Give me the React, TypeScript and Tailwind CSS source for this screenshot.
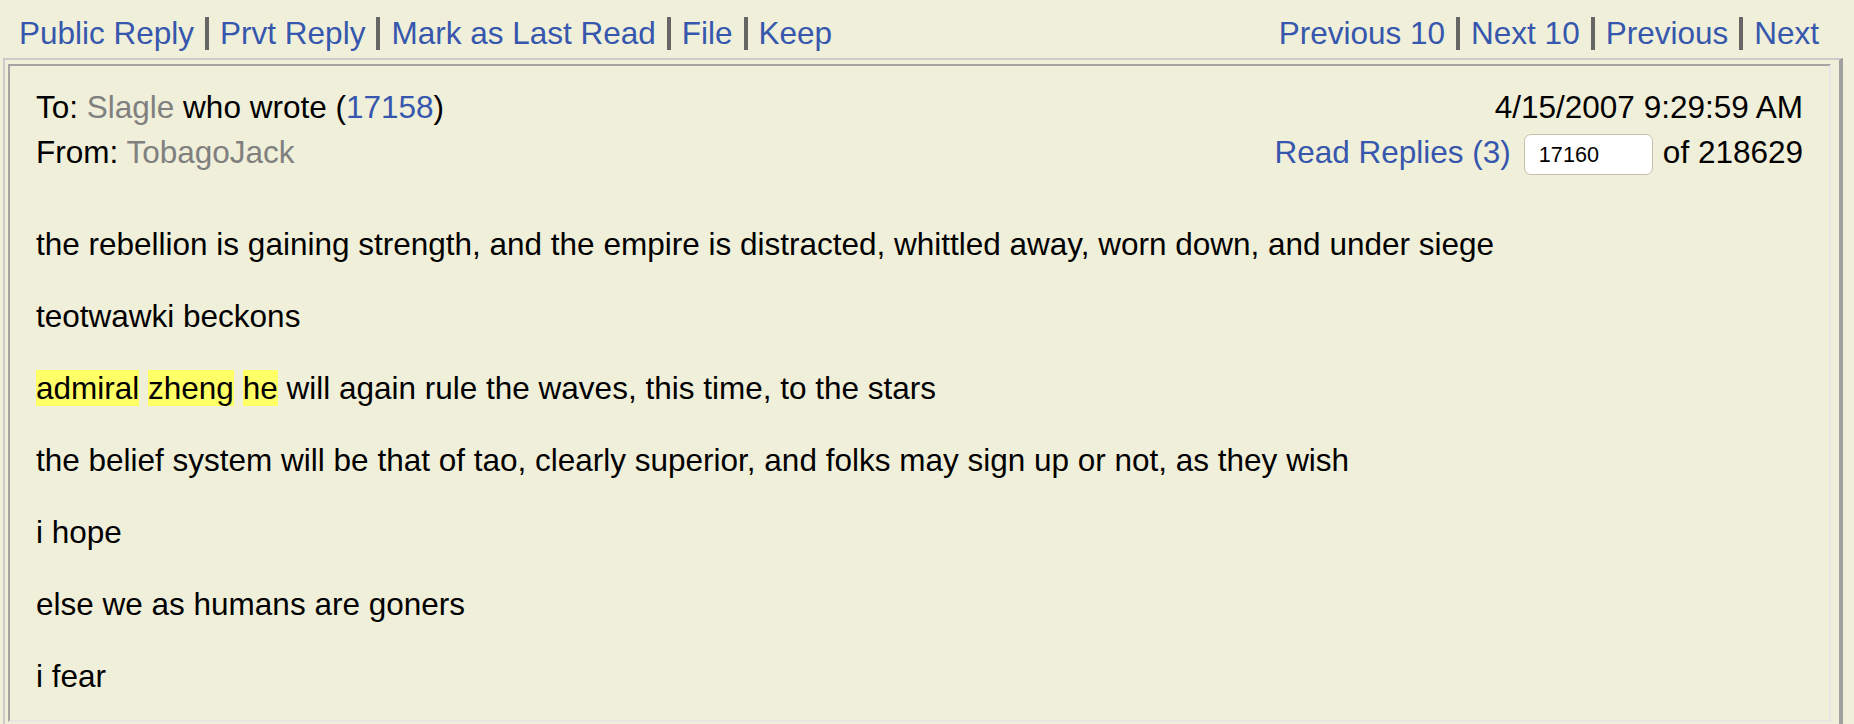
import React from 'react';

const navLeft = ['Public Reply', 'Prvt Reply', 'Mark as Last Read', 'File', 'Keep'];
const navRight = ['Previous 10', 'Next 10', 'Previous', 'Next'];

const NavGroup: React.FC<{ items: string[] }> = ({ items }) => (
  <div className="flex items-center">
    {items.map((label, i) => (
      <React.Fragment key={label}>
        {i > 0 && <span className="mx-[11px] h-[33px] w-[4px] bg-[#666666]" />}
        <a href="#" className="text-[#3657ad] whitespace-nowrap">{label}</a>
      </React.Fragment>
    ))}
  </div>
);

const Hl: React.FC<{ children: React.ReactNode }> = ({ children }) => (
  <span className="bg-[#ffff66]">{children}</span>
);

const App: React.FC = () => {
  return (
    <div className="h-screen overflow-hidden bg-[#f0efd9] text-black font-['Liberation_Sans',Arial,sans-serif] text-[31.5px] leading-[36px]">

      {/* Top links */}
      <div className="flex justify-between pt-[15px] pl-[19px] pr-[35px]">
        <NavGroup items={navLeft} />
        <NavGroup items={navRight} />
      </div>

      {/* Message box */}
      <div className="mt-[7px] ml-[3px] w-[1840px] border-t-2 border-l-2 border-b-2 border-r-4 border-t-[#cbcbcb] border-l-[#cbcbcb] border-r-[#a0a0a0] border-b-[#a0a0a0] pt-[4px] pl-[3px] pr-[8px] pb-[3px]">
        <div className="border-2 border-t-[#a4a4a4] border-l-[#a4a4a4] border-r-[#e6e6e6] border-b-[#e6e6e6] pt-[23px] pl-[26px] pr-[26px] pb-[26px]">

          {/* Header */}
          <div className="flex justify-between">
            <div>
              To: <span className="text-[#808080]">Slagle</span> who wrote (<a href="#" className="text-[#3657ad]">17158</a>)
            </div>
            <div>4/15/2007 9:29:59 AM</div>
          </div>
          <div className="mt-[9px] flex justify-between items-start">
            <div>
              From: <span className="text-[#808080]">TobagoJack</span>
            </div>
            <div className="flex items-start">
              <a href="#" className="text-[#3657ad] mr-[13px]">Read Replies (3)</a>
              <input
                readOnly
                value="17160"
                className="h-[41px] w-[129px] rounded-[7px] border border-[#c4c0ab] bg-white pl-[14px] text-[21.6px] text-black outline-none"
              />
              <span className="ml-[10px]">of 218629</span>
            </div>
          </div>

          {/* Body */}
          <div className="mt-[51px] flex flex-col gap-[36px]">
            <p>the rebellion is gaining strength, and the empire is distracted, whittled away, worn down, and under siege</p>
            <p>teotwawki beckons</p>
            <p>
              <Hl>admiral</Hl> <Hl>zheng</Hl> <Hl>he</Hl> will again rule the waves, this time, to the stars
            </p>
            <p>the belief system will be that of tao, clearly superior, and folks may sign up or not, as they wish</p>
            <p>i hope</p>
            <p>else we as humans are goners</p>
            <p>i fear</p>
          </div>
        </div>
      </div>
    </div>
  );
};

export default App;
